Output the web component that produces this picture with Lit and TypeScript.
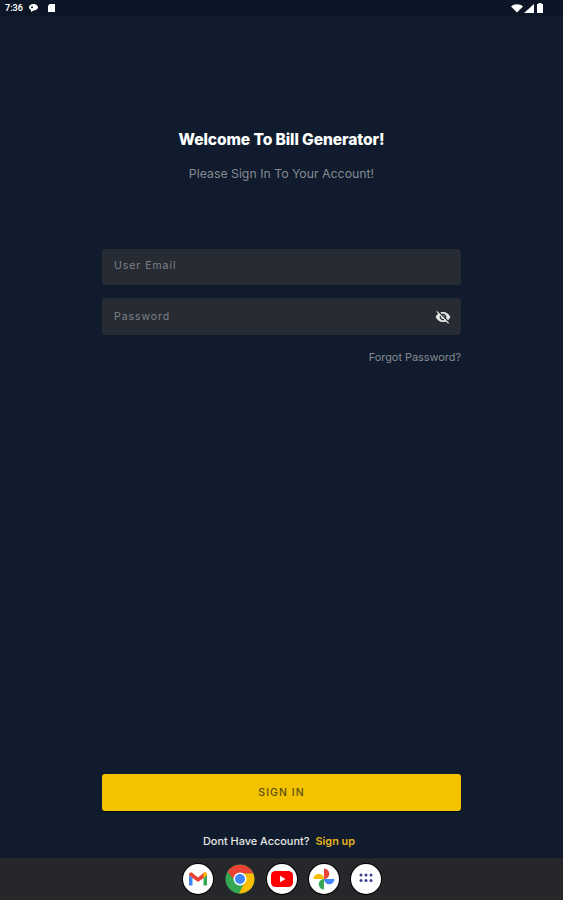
import { LitElement, html, css } from "lit";
import { customElement } from "lit/decorators.js";

@customElement("app-root")
export class AppRoot extends LitElement {
  static styles = css`
    :host {
      display: flex;
      flex-direction: column;
      width: 563px;
      height: 900px;
      overflow: hidden;
      background: #101c2e;
      font-family: Inter, "Noto Sans", sans-serif;
    }
    .status {
      height: 16px;
      flex: none;
      background: #0c1626;
      display: flex;
      align-items: center;
      padding: 0 20px 0 5px;
      color: #fff;
      font-size: 9px;
      font-weight: 600;
      font-family: Roboto, sans-serif;
    }
    .status .left { display: flex; align-items: center; gap: 5px; }
    .status .left .doc { margin-left: 3px; }
    .status .right { margin-left: auto; display: flex; align-items: center; gap: 1px; }
    .status .right .batt { margin-left: 2px; }
    .status svg { display: block; }
    .main {
      flex: 1;
      display: flex;
      flex-direction: column;
      align-items: center;
      padding: 116px 102px 0;
      min-height: 0;
    }
    h1 {
      margin: 0;
      font-size: 15.6px;
      line-height: 16px;
      font-weight: 800;
      color: #fff;
      letter-spacing: -0.1px;
    }
    .sub {
      margin: 18px 0 0;
      font-size: 12.3px;
      line-height: 16px;
      color: #85898f;
    }
    .form {
      align-self: stretch;
      margin-top: 67px;
      display: flex;
      flex-direction: column;
      gap: 13px;
    }
    .field {
      height: 36px;
      box-sizing: border-box;
      background: #272b33;
      border-radius: 3px;
      display: flex;
      align-items: center;
      padding: 0 10px 0 12px;
      color: #7e8289;
      font-size: 10.5px;
      letter-spacing: 0.95px;
    }
    .field.email { padding-bottom: 3px; }
    .field.pw { height: 37px; justify-content: space-between; }
    .forgot {
      align-self: flex-end;
      margin-top: 15px;
      font-size: 10.9px;
      line-height: 14px;
      color: #85898f;
    }
    .spacer { flex: 1; }
    .bottom {
      align-self: stretch;
      display: flex;
      flex-direction: column;
      align-items: center;
    }
    .signin {
      align-self: stretch;
      height: 37px;
      border: 0;
      border-radius: 3px;
      background: #f3c300;
      color: #5c4d10;
      font: 500 10.5px Inter, sans-serif;
      letter-spacing: 1.05px;
      box-shadow: 0 1px 2px #000a;
    }
    .signup {
      margin: 23px 5px 10px 0;
      font-size: 10.9px;
      line-height: 14px;
      font-weight: 500;
      color: #e8e8e8;
      display: flex;
      gap: 6px;
    }
    .signup span { color: #e6b31a; font-weight: 600; }
    .nav {
      height: 42px;
      flex: none;
      background: #25272b;
      display: flex;
      align-items: center;
      justify-content: center;
      gap: 12px;
      box-sizing: border-box;
    }
    .app {
      width: 30px;
      height: 30px;
      border-radius: 50%;
      background: #fff;
      box-shadow: 0 0 0 1px #000;
      display: flex;
      align-items: center;
      justify-content: center;
    }
    .app.chrome { background: none; box-shadow: none; }
  `;

  render() {
    return html`
      <div class="status">
        <div class="left">
          <span>7:36</span>
          <svg width="11" height="10" viewBox="0 0 11 10"><path d="M5.500 1C8 1 10 2.300 10 4.200S8 7.400 5.500 7.400L3 9V7C1.800 6.400 1 5.400 1 4.200 1 2.300 3 1 5.500 1Z" fill="#fff"/><circle cx="4" cy="4.200" r="1" fill="#0c1626"/></svg>
          <svg class="doc" width="9" height="10" viewBox="0 0 9 10"><path d="M2.500 1H8V9H1V3Z" fill="#fff"/></svg>
        </div>
        <div class="right">
          <svg width="12" height="9" viewBox="0 0 12 9"><path d="M0 2.500C3.300 -.5 8.700 -.5 12 2.500L6 8.500Z" fill="#fff"/></svg>
          <svg width="10" height="9" viewBox="0 0 10 9"><path d="M10 0V9H0Z" fill="#fff"/></svg>
          <svg class="batt" width="6" height="10" viewBox="0 0 6 10"><path d="M1.500 0H4.500V1H6V10H0V1H1.500Z" fill="#fff"/></svg>
        </div>
      </div>
      <div class="main">
        <h1>Welcome To Bill Generator!</h1>
        <p class="sub">Please Sign In To Your Account!</p>
        <div class="form">
          <div class="field email">User Email</div>
          <div class="field pw">
            <span>Password</span>
            <svg width="16" height="16" viewBox="0 0 24 24" fill="#e6e6e6"><path d="M12 7c2.760 0 5 2.240 5 5 0 .65-.13 1.260-.36 1.830l2.920 2.920c1.510-1.260 2.700-2.890 3.430-4.750-1.730-4.390-6-7.500-11-7.500-1.400 0-2.740.25-3.980.7l2.160 2.160C10.740 7.130 11.350 7 12 7zM2 4.270l2.280 2.280.46.46C3.080 8.300 1.780 10.020 1 12c1.730 4.390 6 7.500 11 7.500 1.550 0 3.030-.3 4.380-.84l.42.42L19.730 22 21 20.730 3.270 3 2 4.270zM7.530 9.800l1.550 1.550c-.05.21-.08.43-.08.65 0 1.660 1.340 3 3 3 .22 0 .44-.03.65-.08l1.550 1.550c-.67.33-1.410.53-2.200.53-2.760 0-5-2.240-5-5 0-.79.2-1.530.53-2.200zm4.310-.78l3.150 3.150.02-.16c0-1.660-1.340-3-3-3l-.17.010z"/></svg>
          </div>
        </div>
        <div class="forgot">Forgot Password?</div>
        <div class="spacer"></div>
        <div class="bottom">
          <button class="signin">SIGN IN</button>
          <div class="signup">Dont Have Account? <span>Sign up</span></div>
        </div>
      </div>
      <div class="nav">
        <div class="app">
          <svg width="20" height="16" viewBox="0 0 20 16">
            <path d="M1 4V14.500H4.500V7Z" fill="#4285f4"/>
            <path d="M19 4V14.500H15.500V7Z" fill="#34a853"/>
            <path d="M1 4C1 1.500 3 .5 4.500 2L10 6.500 15.500 2C17 .5 19 1.500 19 4L15.500 7 10 11 4.500 7Z" fill="#ea4335"/>
            <path d="M15.500 2C17 .5 19 1.500 19 4L15.500 7Z" fill="#fbbc04"/>
          </svg>
        </div>
        <div class="app chrome">
          <svg width="30" height="30" viewBox="0 0 30 30">
            <circle cx="15" cy="15" r="14.500" fill="#34a853"/>
            <path d="M2.500 7.700A14.500 14.500 0 0 1 28.300 9.500H15A5.500 5.500 0 0 0 9.800 16.800Z" fill="#ea4335"/>
            <path d="M28.300 9.500A14.500 14.500 0 0 1 14 29.500L19.800 18A5.500 5.500 0 0 0 15 9.500Z" fill="#fbbc04"/>
            <circle cx="15" cy="15" r="6.500" fill="#fff"/>
            <circle cx="15" cy="15" r="5" fill="#4285f4"/>
          </svg>
        </div>
        <div class="app">
          <svg width="22" height="16" viewBox="0 0 22 16"><rect width="22" height="16" rx="4.500" fill="#f00"/><path d="M9 4.800V11.200L14.500 8Z" fill="#fff"/></svg>
        </div>
        <div class="app">
          <svg width="22" height="22" viewBox="0 0 22 22">
            <path d="M11 11V.5A5.250 5.250 0 0 1 11 11Z" fill="#ea4335"/>
            <path d="M11 11H21.500A5.250 5.250 0 0 1 11 11Z" fill="#4285f4"/>
            <path d="M11 11V21.500A5.250 5.250 0 0 1 11 11Z" fill="#34a853"/>
            <path d="M11 11H.5A5.250 5.250 0 0 1 11 11Z" fill="#fbbc04"/>
          </svg>
        </div>
        <div class="app">
          <svg width="16" height="12" viewBox="0 0 16 12" fill="#3c3f8f">
            <circle cx="3" cy="2" r="1.500"/><circle cx="8" cy="2" r="1.500"/><circle cx="13" cy="2" r="1.500"/>
            <circle cx="3" cy="7.500" r="1.500"/><circle cx="8" cy="7.500" r="1.500"/><circle cx="13" cy="7.500" r="1.500"/>
          </svg>
        </div>
      </div>
    `;
  }
}
